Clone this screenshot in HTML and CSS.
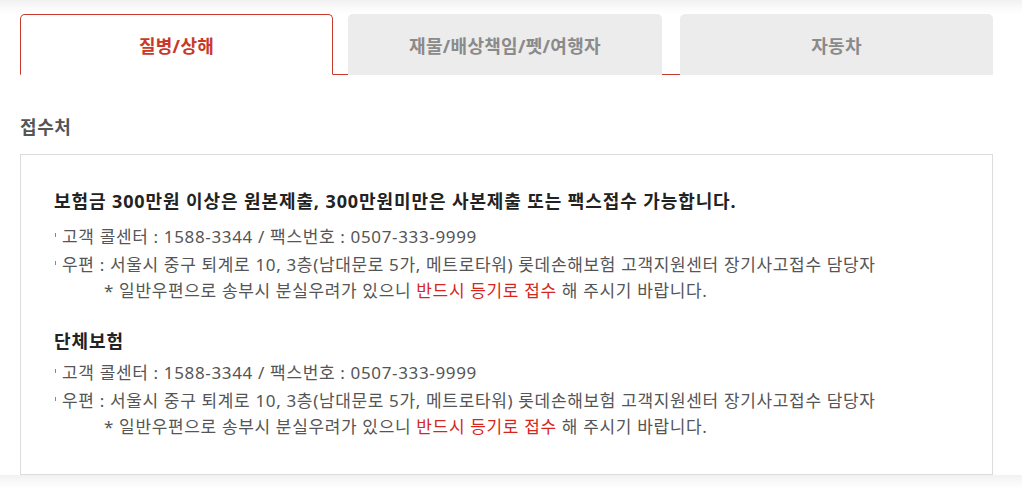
FILE: index.html
```html
<!DOCTYPE html>
<html lang="ko">
<head>
<meta charset="utf-8">
<title>접수처</title>
<link rel="stylesheet" href="styles.css">
</head>
<body>
<div class="page">
  <ul class="tabs">
    <li class="tab is-active">질병/상해</li>
    <li class="tab">재물/배상책임/펫/여행자</li>
    <li class="tab">자동차</li>
  </ul>

  <h3 class="section-title">접수처</h3>

  <div class="box">
    <div class="group">
      <h4 class="lead">보험금 300만원 이상은 원본제출, 300만원미만은 사본제출 또는 팩스접수 가능합니다.</h4>
      <ul class="info-list">
        <li class="info-item">고객 콜센터 : 1588-3344 / 팩스번호 : 0507-333-9999</li>
        <li class="info-item">우편 : 서울시 중구 퇴계로 10, 3층(남대문로 5가, 메트로타워) 롯데손해보험 고객지원센터 장기사고접수 담당자
          <p class="note">* 일반우편으로 송부시 분실우려가 있으니 <em class="warn">반드시 등기로 접수</em> 해 주시기 바랍니다.</p>
        </li>
      </ul>
    </div>
    <div class="group">
      <h4 class="group-title">단체보험</h4>
      <ul class="info-list">
        <li class="info-item">고객 콜센터 : 1588-3344 / 팩스번호 : 0507-333-9999</li>
        <li class="info-item">우편 : 서울시 중구 퇴계로 10, 3층(남대문로 5가, 메트로타워) 롯데손해보험 고객지원센터 장기사고접수 담당자
          <p class="note">* 일반우편으로 송부시 분실우려가 있으니 <em class="warn">반드시 등기로 접수</em> 해 주시기 바랍니다.</p>
        </li>
      </ul>
    </div>
  </div>
</div>
</body>
</html>
```

FILE: styles.css
```css
* { box-sizing: border-box; }

html, body {
  margin: 0;
  padding: 0;
}

body {
  background: linear-gradient(#f1f1f1 0, #fafafa 8px, #ffffff 14px);
  font-family: "Noto Sans", "Noto Sans CJK KR", sans-serif;
  color: #555;
}

.page {
  padding: 14px 29px 0 20px;
}

.tabs {
  list-style: none;
  margin: 0;
  padding: 0;
  display: flex;
  border-bottom: 1px solid #c9392b;
}

.tab {
  width: 313px;
  height: 61px;
  margin-bottom: -1px;
  display: flex;
  align-items: center;
  justify-content: center;
  background: #ececec;
  border-radius: 5px 5px 0 0;
  font-size: 18px;
  font-weight: 700;
  color: #8a8a8a;
  letter-spacing: 0.3px;
}

.tab:nth-child(2) {
  width: 314px;
  margin-left: 15px;
}

.tab:nth-child(3) {
  margin-left: 18px;
}

.tab.is-active {
  background: #fff;
  border: 1px solid #c9392b;
  border-bottom-color: #fff;
  color: #c9392b;
}

.section-title {
  margin: 40px 0 15px;
  font-size: 18px;
  line-height: 24px;
  font-weight: 700;
  color: #555;
  letter-spacing: 0.6px;
}

.box {
  border: 1px solid #dcdcdc;
  padding: 34px 33px 34px;
}

.group + .group {
  margin-top: 25px;
}

.lead,
.group-title {
  margin: 0;
  font-size: 18px;
  line-height: 24px;
  font-weight: 700;
  color: #222;
  letter-spacing: 0.9px;
}

.lead { margin-bottom: 11px; }
.group-title { margin-bottom: 7px; }

.info-list {
  list-style: none;
  margin: 0;
  padding: 0;
}

.info-item {
  position: relative;
  padding-left: 8px;
  font-size: 17px;
  line-height: 26px;
  color: #555;
  letter-spacing: 0.65px;
}

.info-item + .info-item { margin-top: 2px; }

.info-item::before {
  content: "";
  position: absolute;
  left: 1px;
  top: 9px;
  width: 1px;
  height: 4px;
  background: #888;
}

.note {
  margin: 0;
  padding-left: 42px;
}

.warn {
  font-style: normal;
  color: #d7261e;
}
```
